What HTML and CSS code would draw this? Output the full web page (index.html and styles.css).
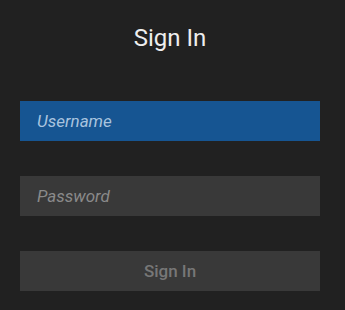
FILE: index.html
```html
<!DOCTYPE html>
<html>
<head>
<meta charset="utf-8">
<link rel="stylesheet" href="styles.css">
</head>
<body>
<div class="page">
  <h1 class="title">Sign In</h1>
  <form class="form">
    <input class="field field-active" type="text" placeholder="Username">
    <input class="field" type="password" placeholder="Password">
    <button class="btn" type="button">Sign In</button>
  </form>
</div>
</body>
</html>
```
FILE: styles.css
```css
html, body {
  margin: 0;
  padding: 0;
  background: #212121;
  height: 100%;
}
.page {
  font-family: Roboto, "Liberation Sans", sans-serif;
  width: 300px;
  padding: 24px 20px 0;
}
.title {
  margin: 0;
  text-align: center;
  font-size: 24px;
  font-weight: 400;
  color: #eeeeee;
  line-height: 28px;
}
.form {
  display: flex;
  flex-direction: column;
  gap: 35px;
  margin-top: 49px;
}
.field, .btn {
  box-sizing: border-box;
  width: 300px;
  height: 40px;
  border: none;
  outline: none;
  margin: 0;
  font-family: Roboto, "Liberation Sans", sans-serif;
  font-size: 17px;
}
.field {
  background: #393939;
  padding: 0 17px;
  font-style: italic;
  color: #ddd;
}
.field::placeholder {
  color: #8a8a8a;
}
.field-active {
  background: #165592;
}
.field-active::placeholder {
  color: #a9c4df;
}
.btn {
  background: #393939;
  color: #777777;
  text-align: center;
  font-weight: 500;
  padding: 0;
}
```
